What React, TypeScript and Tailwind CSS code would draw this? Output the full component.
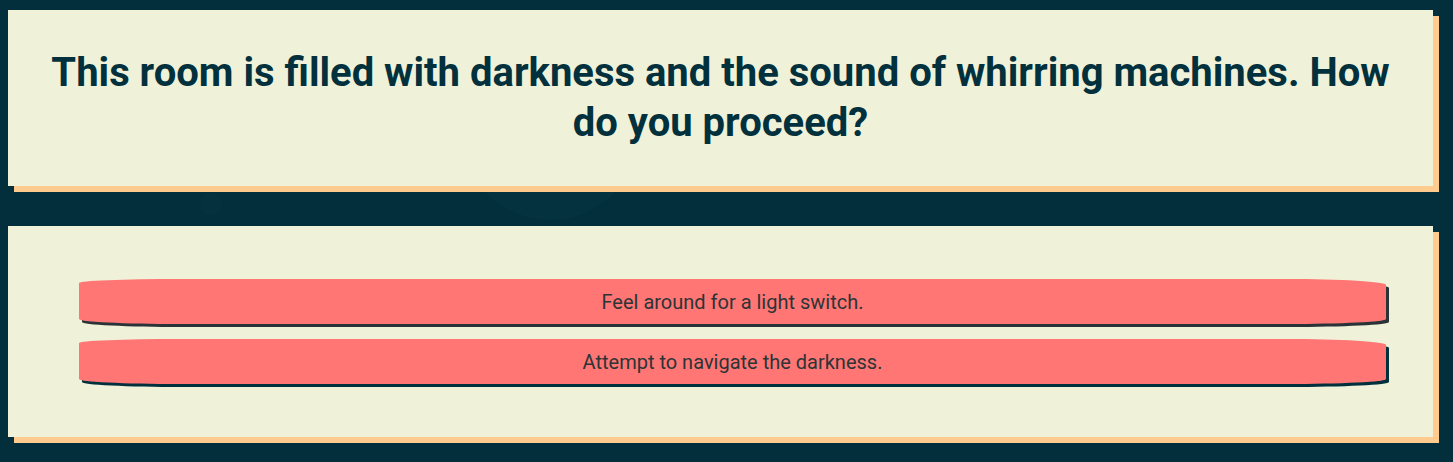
import React from "react";

const choices = ["Feel around for a light switch.", "Attempt to navigate the darkness."];

export default function App() {
  return (
    <div className="relative min-h-screen w-full overflow-hidden bg-[#022f3b] pt-[10px] pl-[8px] pr-[20px] font-['Roboto',sans-serif]">
      {/* faint decorative shapes behind the cards */}
      <div className="absolute left-[200px] top-[193px] h-[22px] w-[22px] rounded-full bg-[#04313d]" />
      <div className="absolute left-[460px] top-[110px] h-[110px] w-[180px] rounded-b-full bg-[#04323e]" />

      <div className="relative flex flex-col gap-[40px]">
        <div className="flex h-[176px] items-center justify-center bg-[#f0f1d9] px-[40px] shadow-[6px_6px_0_0_#ffcb8e]">
          <h1 className="text-center text-[40px] font-bold leading-[50px] text-[#02313d]">
            This room is filled with darkness and the sound of whirring machines. How do you proceed?
          </h1>
        </div>

        <div className="flex h-[211px] flex-col justify-center gap-[15px] bg-[#f0f1d9] pl-[71px] pr-[47px] shadow-[6px_6px_0_0_#ffcb8e]">
          {choices.map((c, i) => (
            <button
              key={c}
              className={`h-[45px] w-full rounded-tl-[100px_4px] rounded-tr-[100px_6px] rounded-br-[100px_5px] rounded-bl-[100px_5px] bg-[#ff7675] text-[20px] text-[#2d3436] ${
                i === 0 ? "shadow-[3px_3px_0_0_#2a3337]" : "shadow-[3px_3px_0_0_#01303d]"
              }`}
            >
              {c}
            </button>
          ))}
        </div>
      </div>
    </div>
  );
}
